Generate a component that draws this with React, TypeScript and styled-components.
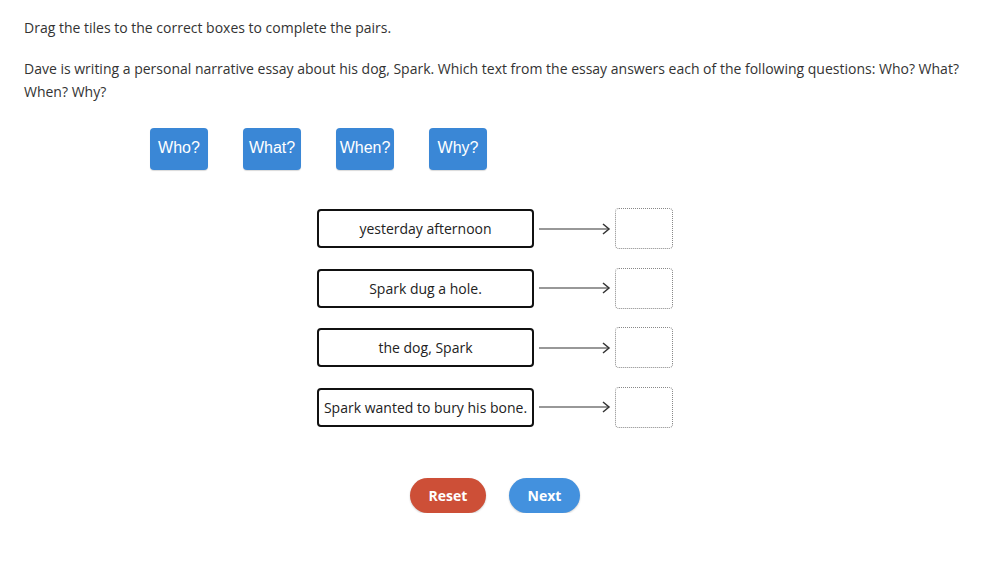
import React from "react";
import styled, { createGlobalStyle } from "styled-components";

const Global = createGlobalStyle`
  html, body { margin: 0; padding: 0; background: #fff; }
  body { font-family: "Open Sans", "Liberation Sans", sans-serif; color: #333; }
`;

const Page = styled.div`
  padding: 16px 24px 0 24px;
  width: 995px;
  box-sizing: border-box;
`;

const Text = styled.p<{ $top?: number }>`
  margin: ${(p) => p.$top ?? 0}px 0 0 0;
  font-size: 14px;
  line-height: 23px;
  color: #333;
`;

const TileRow = styled.div`
  display: flex;
  gap: 35px;
  margin: 25px 0 0 126px;
`;

const Tile = styled.div`
  width: 58px;
  height: 42px;
  box-sizing: border-box;
  padding-bottom: 3px;
  border-radius: 4px;
  background: #3a87d6;
  color: #fff;
  font-family: "Liberation Sans", Arial, sans-serif;
  font-size: 16px;
  display: flex;
  align-items: center;
  justify-content: center;
  box-shadow: 0 1px 1px rgba(0, 0, 0, 0.15);
`;

const Pairs = styled.div`
  display: flex;
  flex-direction: column;
  gap: 20.5px;
  margin: 39px 0 0 293px;
`;

const Pair = styled.div`
  display: flex;
  align-items: center;
  height: 39px;
`;

const Term = styled.div`
  width: 217px;
  height: 39px;
  box-sizing: border-box;
  border: 2px solid #111;
  border-radius: 4px;
  display: flex;
  align-items: center;
  justify-content: center;
  font-size: 14px;
  color: #222;
  white-space: nowrap;
`;

const Arrow = styled.svg`
  width: 72px;
  height: 14px;
  margin: 0 4px 0 5px;
  flex: none;
`;

const Drop = styled.div`
  width: 58px;
  height: 41px;
  box-sizing: border-box;
  border: 1px dotted #888;
  border-radius: 4px;
`;

const Buttons = styled.div`
  display: flex;
  gap: 23px;
  margin: 51px 0 0 386px;
`;

const Button = styled.button<{ $color: string; $w: number }>`
  width: ${(p) => p.$w}px;
  height: 35px;
  border: none;
  border-radius: 18px;
  background: ${(p) => p.$color};
  color: #fff;
  font-family: "Open Sans", "Liberation Sans", sans-serif;
  font-weight: 700;
  font-size: 14px;
  padding: 0;
  box-shadow: 0 1px 2px rgba(0, 0, 0, 0.2);
  cursor: pointer;
`;

const tiles = ["Who?", "What?", "When?", "Why?"];
const terms = [
  "yesterday afternoon",
  "Spark dug a hole.",
  "the dog, Spark",
  "Spark wanted to bury his bone.",
];

export default function App() {
  return (
    <>
      <Global />
      <Page>
        <Text>Drag the tiles to the correct boxes to complete the pairs.</Text>
        <Text $top={18}>
          Dave is writing a personal narrative essay about his dog, Spark. Which text from the essay answers each
          of the following questions: Who? What? When? Why?
        </Text>
        <TileRow>
          {tiles.map((t) => (
            <Tile key={t}>{t}</Tile>
          ))}
        </TileRow>
        <Pairs>
          {terms.map((t) => (
            <Pair key={t}>
              <Term>{t}</Term>
              <Arrow viewBox="0 0 72 14">
                <line x1="0" y1="7" x2="70" y2="7" stroke="#333" strokeWidth="1.2" />
                <polyline points="64,2 70,7 64,12" fill="none" stroke="#333" strokeWidth="1.5" />
              </Arrow>
              <Drop />
            </Pair>
          ))}
        </Pairs>
        <Buttons>
          <Button $color="#cd4f37" $w={76}>Reset</Button>
          <Button $color="#4391de" $w={71}>Next</Button>
        </Buttons>
      </Page>
    </>
  );
}
